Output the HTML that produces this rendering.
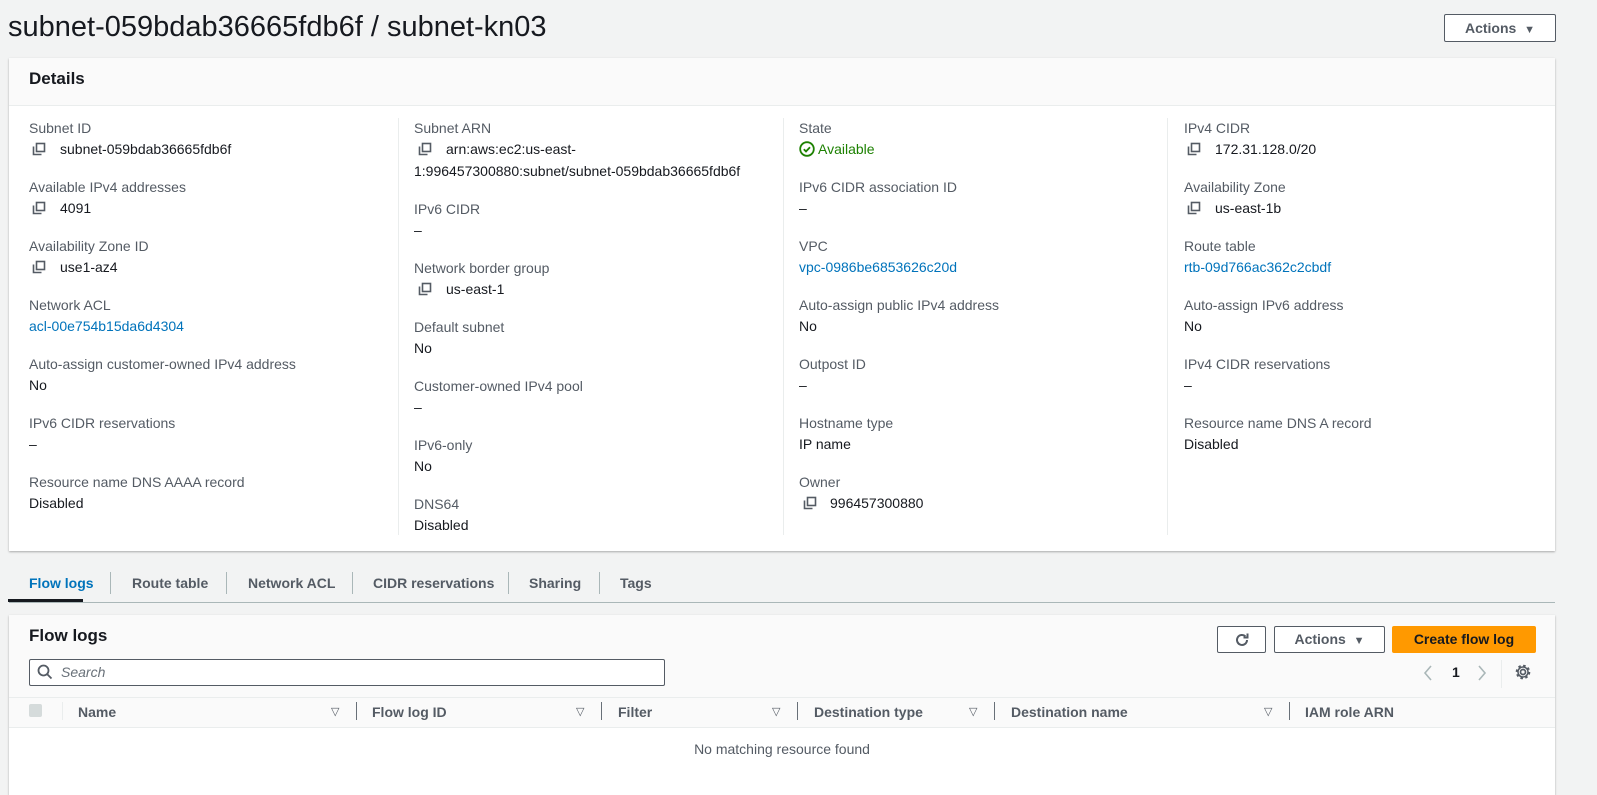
<!DOCTYPE html>
<html><head><meta charset="utf-8"><style>
body{margin:0;width:1597px;height:789px;background:#f2f3f3;font-family:"Liberation Sans",sans-serif;font-size:14px;color:#16191f;position:relative;overflow:hidden}
.a{position:absolute;line-height:20px;white-space:nowrap}
.l{color:#545b64}
.k{color:#0073bb}
.cp{position:absolute;width:14px;height:14px}
.btn{position:absolute;border:1px solid #545b64;border-radius:2px;background:#fff;font-weight:bold;color:#545b64;box-sizing:border-box;text-align:center}
.sep{position:absolute;width:1px;background:#eaeded}
</style></head><body>
<div class="a" style="left:8px;top:11px;font-size:29px;line-height:33px">subnet-059bdab36665fdb6f / subnet-kn03</div>
<div class="btn" style="left:1444px;top:14px;width:112px;height:28px;line-height:26px">Actions&nbsp; <span style="font-size:11px">▼</span></div>

<div style="position:absolute;left:9px;top:58px;width:1546px;height:493px;background:#fff;box-shadow:0 1px 2px rgba(0,0,0,.3)">
<div style="height:47px;background:#fafafa;border-bottom:1px solid #eaeded"></div></div>
<div class="a" style="left:29px;top:69px;font-size:17px;font-weight:bold">Details</div>
<div class="sep" style="left:398px;top:118px;height:417px"></div>
<div class="sep" style="left:783px;top:118px;height:417px"></div>
<div class="sep" style="left:1167px;top:118px;height:417px"></div>

<svg width="0" height="0" style="position:absolute"><defs><g id="c"><rect x="4.5" y="1.5" width="8" height="8" fill="none" stroke="#545b64" stroke-width="1.6"/><path d="M1.5 4.5v8h8" fill="none" stroke="#545b64" stroke-width="1.6"/></g></defs></svg>

<div class="a l" style="left:29px;top:118px">Subnet ID</div>
<svg class="cp" style="left:32px;top:142px"><use href="#c"/></svg><div class="a" style="left:60px;top:139px">subnet-059bdab36665fdb6f</div>
<div class="a l" style="left:29px;top:177px">Available IPv4 addresses</div>
<svg class="cp" style="left:32px;top:201px"><use href="#c"/></svg><div class="a" style="left:60px;top:198px">4091</div>
<div class="a l" style="left:29px;top:236px">Availability Zone ID</div>
<svg class="cp" style="left:32px;top:260px"><use href="#c"/></svg><div class="a" style="left:60px;top:257px">use1-az4</div>
<div class="a l" style="left:29px;top:295px">Network ACL</div>
<div class="a k" style="left:29px;top:316px">acl-00e754b15da6d4304</div>
<div class="a l" style="left:29px;top:354px">Auto-assign customer-owned IPv4 address</div>
<div class="a" style="left:29px;top:375px">No</div>
<div class="a l" style="left:29px;top:413px">IPv6 CIDR reservations</div>
<div class="a" style="left:29px;top:434px">–</div>
<div class="a l" style="left:29px;top:472px">Resource name DNS AAAA record</div>
<div class="a" style="left:29px;top:493px">Disabled</div>

<div class="a l" style="left:414px;top:118px">Subnet ARN</div>
<svg class="cp" style="left:418px;top:142px"><use href="#c"/></svg><div class="a" style="left:446px;top:139px">arn:aws:ec2:us-east-</div>
<div class="a" style="left:414px;top:161px">1:996457300880:subnet/subnet-059bdab36665fdb6f</div>
<div class="a l" style="left:414px;top:199px">IPv6 CIDR</div>
<div class="a" style="left:414px;top:220px">–</div>
<div class="a l" style="left:414px;top:258px">Network border group</div>
<svg class="cp" style="left:418px;top:282px"><use href="#c"/></svg><div class="a" style="left:446px;top:279px">us-east-1</div>
<div class="a l" style="left:414px;top:317px">Default subnet</div>
<div class="a" style="left:414px;top:338px">No</div>
<div class="a l" style="left:414px;top:376px">Customer-owned IPv4 pool</div>
<div class="a" style="left:414px;top:397px">–</div>
<div class="a l" style="left:414px;top:435px">IPv6-only</div>
<div class="a" style="left:414px;top:456px">No</div>
<div class="a l" style="left:414px;top:494px">DNS64</div>
<div class="a" style="left:414px;top:515px">Disabled</div>

<div class="a l" style="left:799px;top:118px">State</div>
<svg style="position:absolute;left:799px;top:141px" width="16" height="16"><circle cx="8" cy="8" r="6.8" fill="none" stroke="#1d8102" stroke-width="1.8"/><path d="M4.8 8.2l2.2 2.2 4-4.2" fill="none" stroke="#1d8102" stroke-width="1.8"/></svg>
<div class="a" style="left:818px;top:139px;color:#1d8102">Available</div>
<div class="a l" style="left:799px;top:177px">IPv6 CIDR association ID</div>
<div class="a" style="left:799px;top:198px">–</div>
<div class="a l" style="left:799px;top:236px">VPC</div>
<div class="a k" style="left:799px;top:257px">vpc-0986be6853626c20d</div>
<div class="a l" style="left:799px;top:295px">Auto-assign public IPv4 address</div>
<div class="a" style="left:799px;top:316px">No</div>
<div class="a l" style="left:799px;top:354px">Outpost ID</div>
<div class="a" style="left:799px;top:375px">–</div>
<div class="a l" style="left:799px;top:413px">Hostname type</div>
<div class="a" style="left:799px;top:434px">IP name</div>
<div class="a l" style="left:799px;top:472px">Owner</div>
<svg class="cp" style="left:803px;top:496px"><use href="#c"/></svg><div class="a" style="left:830px;top:493px">996457300880</div>

<div class="a l" style="left:1184px;top:118px">IPv4 CIDR</div>
<svg class="cp" style="left:1187px;top:142px"><use href="#c"/></svg><div class="a" style="left:1215px;top:139px">172.31.128.0/20</div>
<div class="a l" style="left:1184px;top:177px">Availability Zone</div>
<svg class="cp" style="left:1187px;top:201px"><use href="#c"/></svg><div class="a" style="left:1215px;top:198px">us-east-1b</div>
<div class="a l" style="left:1184px;top:236px">Route table</div>
<div class="a k" style="left:1184px;top:257px">rtb-09d766ac362c2cbdf</div>
<div class="a l" style="left:1184px;top:295px">Auto-assign IPv6 address</div>
<div class="a" style="left:1184px;top:316px">No</div>
<div class="a l" style="left:1184px;top:354px">IPv4 CIDR reservations</div>
<div class="a" style="left:1184px;top:375px">–</div>
<div class="a l" style="left:1184px;top:413px">Resource name DNS A record</div>
<div class="a" style="left:1184px;top:434px">Disabled</div>

<div style="position:absolute;left:9px;top:602px;width:1546px;height:1px;background:#aab7b8"></div>
<div style="position:absolute;left:8px;top:599px;width:75px;height:3px;background:#16191f"></div>
<div class="a" style="left:29px;top:573px;font-weight:bold;color:#0073bb">Flow logs</div>
<div class="sep" style="left:110px;top:572px;height:22px;background:#aab7b8"></div>
<div class="a" style="left:132px;top:573px;font-weight:bold;color:#545b64">Route table</div>
<div class="sep" style="left:226px;top:572px;height:22px;background:#aab7b8"></div>
<div class="a" style="left:248px;top:573px;font-weight:bold;color:#545b64">Network ACL</div>
<div class="sep" style="left:352px;top:572px;height:22px;background:#aab7b8"></div>
<div class="a" style="left:373px;top:573px;font-weight:bold;color:#545b64">CIDR reservations</div>
<div class="sep" style="left:508px;top:572px;height:22px;background:#aab7b8"></div>
<div class="a" style="left:529px;top:573px;font-weight:bold;color:#545b64">Sharing</div>
<div class="sep" style="left:599px;top:572px;height:22px;background:#aab7b8"></div>
<div class="a" style="left:620px;top:573px;font-weight:bold;color:#545b64">Tags</div>

<div style="position:absolute;left:9px;top:615px;width:1546px;height:180px;background:#fff;box-shadow:0 1px 2px rgba(0,0,0,.3)">
<div style="height:82px;background:#fafafa;border-bottom:1px solid #eaeded"></div>
<div style="height:29px;background:#fafafa;border-bottom:1px solid #eaeded"></div></div>
<div class="a" style="left:29px;top:626px;font-size:17px;font-weight:bold">Flow logs</div>
<div class="btn" style="left:1217px;top:626px;width:49px;height:27px"><svg width="18" height="18" style="margin-top:4px" viewBox="0 0 18 18"><path d="M14 9a5 5 0 1 1-1.6-3.7" fill="none" stroke="#545b64" stroke-width="2"/><path d="M14.5 2.5v4h-4" fill="none" stroke="#545b64" stroke-width="2"/></svg></div>
<div class="btn" style="left:1274px;top:626px;width:111px;height:27px;line-height:25px">Actions&nbsp; <span style="font-size:11px">▼</span></div>
<div class="btn" style="left:1392px;top:626px;width:144px;height:27px;line-height:25px;background:#ff9900;border-color:#ff9900;color:#16191f">Create flow log</div>
<div style="position:absolute;left:29px;top:659px;width:634px;height:25px;border:1px solid #545b64;border-radius:2px;background:#fff"></div>
<svg style="position:absolute;left:37px;top:664px" width="16" height="16"><circle cx="6.5" cy="6.5" r="5" fill="none" stroke="#545b64" stroke-width="1.8"/><path d="M10 10l4.5 4.5" stroke="#545b64" stroke-width="1.8"/></svg>
<div class="a" style="left:61px;top:662px;font-style:italic;color:#687078">Search</div>
<svg style="position:absolute;left:1422px;top:663px" width="90" height="20"><path d="M9 3l-6 7 6 7" fill="none" stroke="#aab7b8" stroke-width="1.6"/><path d="M57 3l6 7-6 7" fill="none" stroke="#aab7b8" stroke-width="1.6"/></svg>
<div class="a" style="left:1452px;top:662px;font-weight:bold">1</div>
<div class="sep" style="left:1501px;top:660px;height:28px"></div>
<svg style="position:absolute;left:1514px;top:663px" width="18" height="18" viewBox="0 0 18 18"><circle cx="9" cy="9" r="2.5" fill="none" stroke="#545b64" stroke-width="1.7"/><circle cx="9" cy="9" r="6" fill="none" stroke="#545b64" stroke-width="2.6" stroke-dasharray="2.4 2.3"/><circle cx="9" cy="9" r="5" fill="none" stroke="#545b64" stroke-width="1.5"/></svg>

<div style="position:absolute;left:29px;top:704px;width:13px;height:13px;background:#d5dbdb;border-radius:2px"></div>
<div class="sep" style="left:62px;top:702px;height:18px"></div>
<div class="a" style="left:78px;top:702px;font-weight:bold;color:#545b64">Name</div>
<div class="a" style="left:331px;top:702px;font-size:11px;color:#545b64">▽</div>
<div class="sep" style="left:356px;top:702px;height:18px;background:#687078"></div>
<div class="a" style="left:372px;top:702px;font-weight:bold;color:#545b64">Flow log ID</div>
<div class="a" style="left:576px;top:702px;font-size:11px;color:#545b64">▽</div>
<div class="sep" style="left:601px;top:702px;height:18px;background:#687078"></div>
<div class="a" style="left:618px;top:702px;font-weight:bold;color:#545b64">Filter</div>
<div class="a" style="left:772px;top:702px;font-size:11px;color:#545b64">▽</div>
<div class="sep" style="left:797px;top:702px;height:18px;background:#687078"></div>
<div class="a" style="left:814px;top:702px;font-weight:bold;color:#545b64">Destination type</div>
<div class="a" style="left:969px;top:702px;font-size:11px;color:#545b64">▽</div>
<div class="sep" style="left:994px;top:702px;height:18px;background:#687078"></div>
<div class="a" style="left:1011px;top:702px;font-weight:bold;color:#545b64">Destination name</div>
<div class="a" style="left:1264px;top:702px;font-size:11px;color:#545b64">▽</div>
<div class="sep" style="left:1289px;top:702px;height:18px;background:#687078"></div>
<div class="a" style="left:1305px;top:702px;font-weight:bold;color:#545b64">IAM role ARN</div>
<div class="a" style="left:0;width:1564px;text-align:center;top:739px;color:#545b64">No matching resource found</div>
</body></html>
